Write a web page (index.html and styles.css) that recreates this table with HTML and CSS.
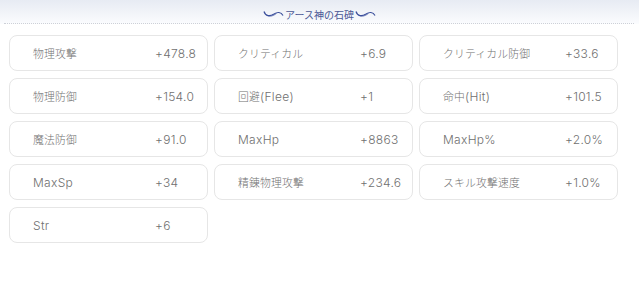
FILE: index.html
```html
<!DOCTYPE html>
<html lang="ja">
<head>
<meta charset="utf-8">
<link rel="stylesheet" href="styles.css">
</head>
<body>
<header class="head">
  <div class="title">
    <svg class="orn" width="21" height="9" viewBox="0 0 21 9"><path d="M1 1.5 C2.5 6.5 7 6.5 11 4 C14 2 18 1.5 20 5.5" fill="none" stroke="#3b4f9c" stroke-width="1.2"/><path d="M3.5 5 C7 7.5 10.5 5.5 13.5 3.5" fill="none" stroke="#3b4f9c" stroke-width="0.7"/></svg>
    <span>アース神の石碑</span>
    <svg class="orn" width="21" height="9" viewBox="0 0 21 9"><path d="M1 1.5 C2.5 6.5 7 6.5 11 4 C14 2 18 1.5 20 5.5" fill="none" stroke="#3b4f9c" stroke-width="1.2"/><path d="M3.5 5 C7 7.5 10.5 5.5 13.5 3.5" fill="none" stroke="#3b4f9c" stroke-width="0.7"/></svg>
  </div>
</header>
<main class="grid">
  <div class="card"><span class="lbl"><span class="jp">物理攻撃</span></span><span class="val">+478.8</span></div>
  <div class="card"><span class="lbl"><span class="jp">クリティカル</span></span><span class="val">+6.9</span></div>
  <div class="card"><span class="lbl"><span class="jp">クリティカル防御</span></span><span class="val">+33.6</span></div>
  <div class="card"><span class="lbl"><span class="jp">物理防御</span></span><span class="val">+154.0</span></div>
  <div class="card"><span class="lbl"><span class="jp">回避</span>(Flee)</span><span class="val">+1</span></div>
  <div class="card"><span class="lbl"><span class="jp">命中</span>(Hit)</span><span class="val">+101.5</span></div>
  <div class="card"><span class="lbl"><span class="jp">魔法防御</span></span><span class="val">+91.0</span></div>
  <div class="card"><span class="lbl">MaxHp</span><span class="val">+8863</span></div>
  <div class="card"><span class="lbl">MaxHp%</span><span class="val">+2.0%</span></div>
  <div class="card"><span class="lbl">MaxSp</span><span class="val">+34</span></div>
  <div class="card"><span class="lbl"><span class="jp">精錬物理攻撃</span></span><span class="val">+234.6</span></div>
  <div class="card"><span class="lbl"><span class="jp">スキル攻撃速度</span></span><span class="val">+1.0%</span></div>
  <div class="card"><span class="lbl">Str</span><span class="val">+6</span></div>
</main>
</body>
</html>
```
FILE: styles.css
```css
html, body {
  margin: 0;
  padding: 0;
  background: #fff;
}
body {
  width: 639px;
  height: 288px;
  overflow: hidden;
  font-family: "Inter", "Noto Sans CJK JP", sans-serif;
}
.head {
  height: 24px;
  background: linear-gradient(#e7ebf3, #fbfcfe);
  position: relative;
  display: flex;
  justify-content: center;
  align-items: center;
}
.head::after {
  content: "";
  position: absolute;
  left: 4px;
  right: 5px;
  bottom: 0;
  border-bottom: 1px dotted #cdd0d7;
}
.title {
  display: flex;
  align-items: center;
  gap: 1px;
  font-family: "Noto Sans CJK JP", sans-serif;
  font-size: 10px;
  color: #4a5895;
  padding-top: 5px;
}
.orn {
  display: block;
}
.grid {
  display: grid;
  grid-template-columns: repeat(3, 199px);
  grid-auto-rows: 36px;
  column-gap: 6px;
  row-gap: 7px;
  padding: 11px 0 0 9px;
}
.card {
  border: 1px solid #e6e6e6;
  border-radius: 8px;
  display: grid;
  grid-template-columns: 122px auto;
  align-items: center;
  padding-left: 23px;
  font-size: 12px;
  font-weight: 300;
  color: #707070;
  letter-spacing: 0.3px;
}
.lbl, .val {
  white-space: nowrap;
}
.jp {
  font-family: "Noto Sans CJK JP", sans-serif;
  font-size: 10.8px;
  letter-spacing: 0.2px;
}
```
